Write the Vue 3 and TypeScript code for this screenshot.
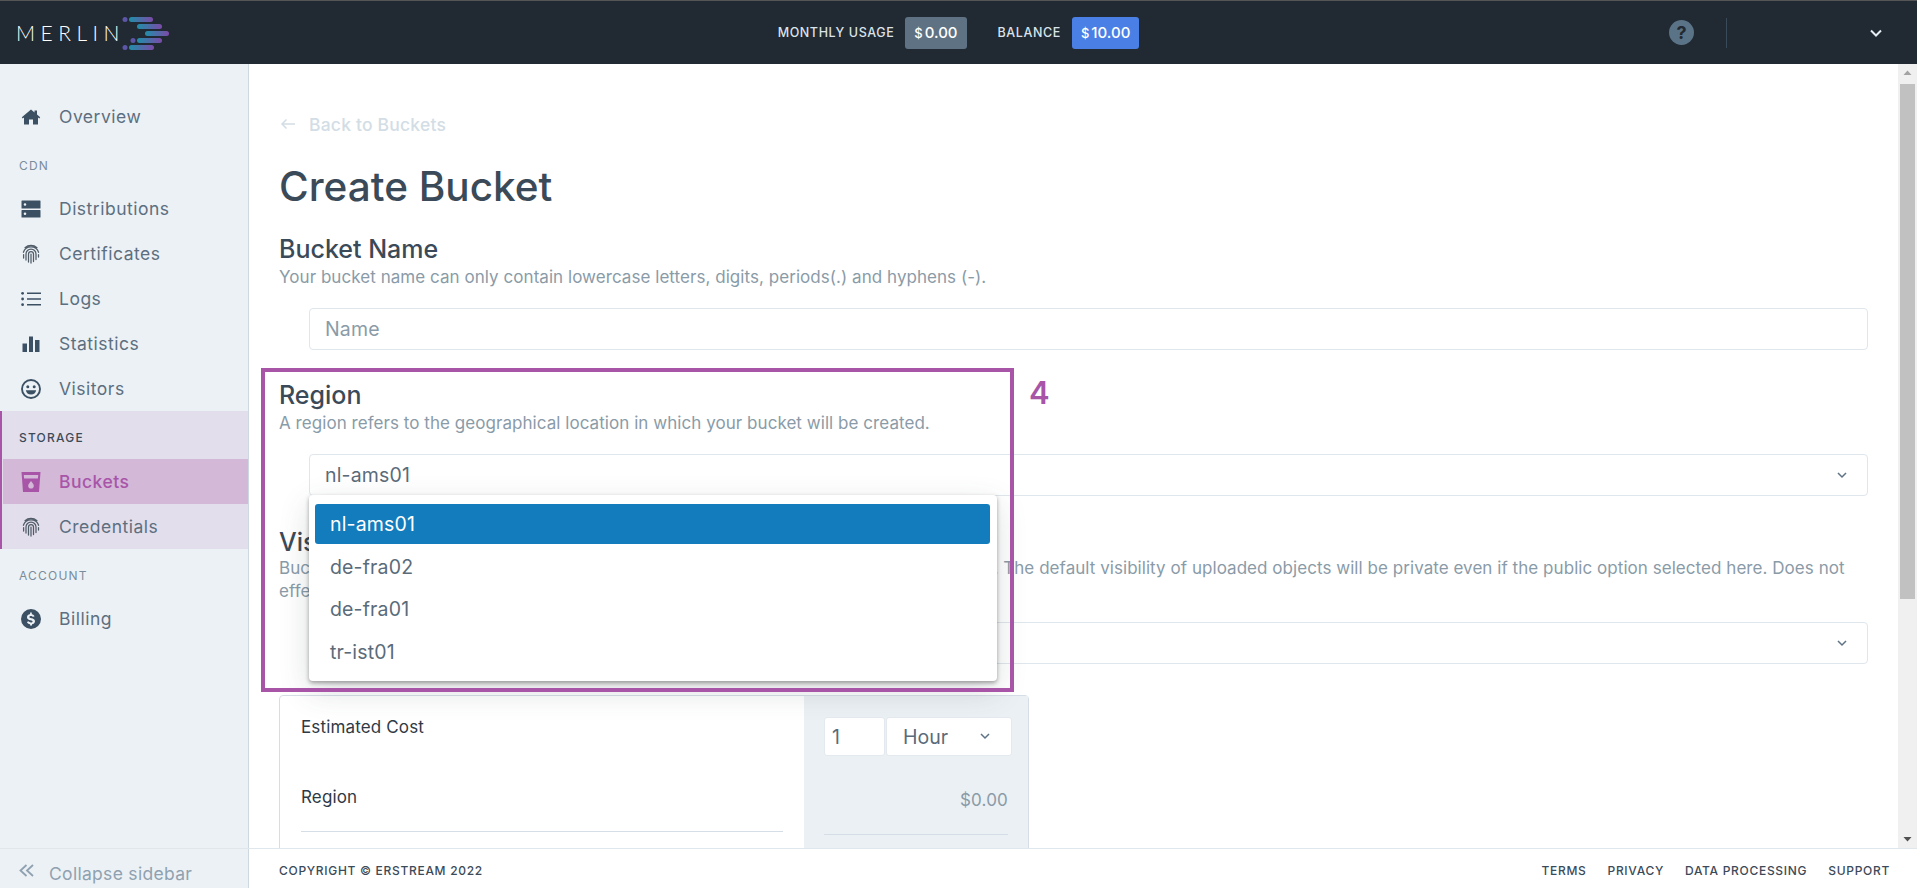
<script setup lang="ts">
const regions: string[] = ['nl-ams01', 'de-fra02', 'de-fra01', 'tr-ist01']
const footerLinks: string[] = ['TERMS', 'PRIVACY', 'DATA PROCESSING', 'SUPPORT']
const printPath =
  'M4 3.600a9 9 0 0 1 12 0M2.400 8.300a8 8 0 0 1 15.200 0M2.600 14v-3.500M17.500 13v-2.500M5 16V10a5 5 0 0 1 10 0v5.500M7.500 18V10a2.500 2.500 0 0 1 5 0v7.500M10 10v9'
</script>

<template>
  <div class="app">
    <header class="topbar">
      <div class="logo">
        <span class="logo-word">MERLIN</span>
        <svg class="logo-mark" width="50" height="34" viewBox="0 0 50 34">
          <defs>
            <linearGradient id="pill" x1="0" y1="0" x2="1" y2="0">
              <stop offset="0" stop-color="#1f8fa8" />
              <stop offset="1" stop-color="#7d4aa8" />
            </linearGradient>
          </defs>
          <circle cx="3" cy="3.500" r="2.500" fill="#5d55a8" />
          <rect x="7" y="1" width="24" height="5" rx="2.500" fill="url(#pill)" />
          <rect x="15" y="8" width="25" height="5" rx="2.500" fill="url(#pill)" />
          <rect x="23" y="15" width="24" height="5" rx="2.500" fill="url(#pill)" />
          <circle cx="11" cy="24.500" r="2.500" fill="#5d55a8" />
          <rect x="15" y="22" width="25" height="5" rx="2.500" fill="url(#pill)" />
          <circle cx="3" cy="31.500" r="2.500" fill="#5d55a8" />
          <rect x="7" y="29" width="25" height="5" rx="2.500" fill="url(#pill)" />
        </svg>
      </div>
      <div class="usage">
        <span class="usage-label">MONTHLY USAGE</span>
        <span class="pill pill-grey"><small>$</small>0.00</span>
        <span class="usage-label balance">BALANCE</span>
        <span class="pill pill-blue"><small>$</small>10.00</span>
      </div>
      <div class="top-right">
        <span class="help">?</span>
        <span class="divider"></span>
        <svg class="top-chev" width="14" height="10" viewBox="0 0 14 10"><path d="M2 2.500l5 5 5-5" fill="none" stroke="#e6edf3" stroke-width="2" /></svg>
      </div>
    </header>

    <div class="middle">
      <aside class="sidebar">
        <nav class="nav">
          <a class="item">
            <svg class="ico" viewBox="0 0 20 20"><path d="M10 2.500L.8 10.300l.9 1.100 1.300-1v7.100h5v-5h4v5h5v-7.100l1.300 1 .9-1.100-3.200-2.700V3.500h-2.500v1.900z" /></svg>
            <span>Overview</span>
          </a>
          <div class="label cdn">CDN</div>
          <a class="item">
            <svg class="ico" viewBox="0 0 20 20"><path fill-rule="evenodd" d="M1 1.500h18a.5.5 0 0 1 .5.5v7a.5.5 0 0 1-.5.5H1a.5.5 0 0 1-.5-.5V2a.5.5 0 0 1 .5-.5zM4 4.200a1.300 1.300 0 1 0 0 2.600 1.300 1.300 0 0 0 0-2.600zM1 11h18a.5.5 0 0 1 .5.5V18a.5.5 0 0 1-.5.5H1a.5.5 0 0 1-.5-.5v-6.500A.5.5 0 0 1 1 11zm3 2.500a1.300 1.300 0 1 0 0 2.600 1.300 1.300 0 0 0 0-2.600z" /></svg>
            <span>Distributions</span>
          </a>
          <a class="item">
            <svg class="ico print" viewBox="0 0 20 20"><path :d="printPath" /></svg>
            <span>Certificates</span>
          </a>
          <a class="item">
            <svg class="ico" viewBox="0 0 20 20"><path d="M6 3.500h14v1.600H6zM6 9.200h14v1.600H6zM6 14.900h14v1.600H6z" /><circle cx="1.600" cy="4.300" r="1.400" /><circle cx="1.600" cy="10" r="1.400" /><circle cx="1.600" cy="15.700" r="1.400" /></svg>
            <span>Logs</span>
          </a>
          <a class="item">
            <svg class="ico" viewBox="0 0 20 20"><path d="M1.500 9.500h4.500V18H1.500zM8 2.500h4V18H8zM14 6h4.500v12H14z" /></svg>
            <span>Statistics</span>
          </a>
          <a class="item">
            <svg class="ico" viewBox="0 0 20 20"><circle cx="10" cy="10" r="9" fill="none" stroke="currentColor" stroke-width="1.900" /><circle cx="6.800" cy="7.800" r="1.500" /><circle cx="13.200" cy="7.800" r="1.500" /><path d="M4.800 11.300h10.400a5.300 5.300 0 0 1-10.400 0z" /></svg>
            <span>Visitors</span>
          </a>
          <section class="group">
            <div class="label strong">STORAGE</div>
            <a class="item active">
              <svg class="ico" viewBox="0 0 20 20"><path fill-rule="evenodd" d="M.5 0h19L18 20H2zM2.800 3l.3 3.500h13.800l.3-3.500zM10 9c-1.200 1.800-2.800 3-2.800 4.800a2.800 2.800 0 0 0 5.600 0C12.800 12 11.200 10.800 10 9z" /></svg>
              <span>Buckets</span>
            </a>
            <a class="item">
              <svg class="ico print" viewBox="0 0 20 20"><path :d="printPath" /></svg>
              <span>Credentials</span>
            </a>
          </section>
          <div class="label account">ACCOUNT</div>
          <a class="item">
            <svg class="ico" viewBox="0 0 20 20"><path fill-rule="evenodd" d="M10 0a10 10 0 1 1 0 20 10 10 0 0 1 0-20zM9.100 3.500v1.600C7.300 5.400 6 6.600 6 8.200c0 1.900 1.600 2.600 3.400 3 1.600.4 2.200.7 2.200 1.300 0 .6-.7 1-1.700 1-1.100 0-1.900-.5-2.200-1.200l-1.800.7c.4 1.200 1.600 2 3.200 2.300v1.200h1.900v-1.200c1.800-.3 3-1.400 3-3 0-2-1.700-2.700-3.500-3.100-1.500-.4-2.100-.6-2.100-1.200 0-.6.6-1 1.500-1 1 0 1.600.4 1.900 1l1.800-.7c-.4-1-1.400-1.800-2.800-2.100V3.500z" /></svg>
            <span>Billing</span>
          </a>
        </nav>
      </aside>

      <main class="content">
        <a class="back"><svg width="16" height="12" viewBox="0 0 16 12"><path d="M15 6H2M6.500 1.500L2 6l4.500 4.500" fill="none" stroke="#d3dde5" stroke-width="1.500" /></svg><span>Back to Buckets</span></a>
        <h1>Create Bucket</h1>

        <section class="field">
          <h2>Bucket Name</h2>
          <p>Your bucket name can only contain lowercase letters, digits, periods(.) and hyphens (-).</p>
          <div class="control placeholder">Name</div>
        </section>

        <section class="field">
          <h2>Region</h2>
          <p>A region refers to the geographical location in which your bucket will be created.</p>
          <div class="control">
            <span>nl-ams01</span>
            <svg class="chev" width="10" height="7" viewBox="0 0 10 7"><path d="M1 1l4 4 4-4" fill="none" stroke="#5d7285" stroke-width="1.500" /></svg>
          </div>
        </section>

        <section class="field vis">
          <h2>Visibility</h2>
          <p>Bucket visibility determines who can list the objects that are stored inside of your bucket. The default visibility of uploaded objects will be private even if the public option selected here. Does not effect objects that are already uploaded.</p>
          <div class="control">
            <svg class="chev end" width="10" height="7" viewBox="0 0 10 7"><path d="M1 1l4 4 4-4" fill="none" stroke="#5d7285" stroke-width="1.500" /></svg>
          </div>
        </section>

        <div class="card">
          <div class="card-left">
            <div class="cost-title">Estimated Cost</div>
            <div class="cost-region">Region</div>
            <hr />
          </div>
          <div class="card-right">
            <div class="period">
              <div class="qty">1</div>
              <div class="unit">
                <span>Hour</span>
                <svg width="10" height="7" viewBox="0 0 10 7"><path d="M1 1l4 4 4-4" fill="none" stroke="#5d7285" stroke-width="1.500" /></svg>
              </div>
            </div>
            <div class="price">$0.00</div>
            <hr />
          </div>
        </div>

        <ul class="menu">
          <li v-for="(region, i) in regions" :key="region" :class="{ selected: i === 0 }">{{ region }}</li>
        </ul>
        <div class="callout"></div>
        <div class="callout-num">4</div>
      </main>

      <div class="scrollbar">
        <svg width="19" height="17" viewBox="0 0 19 17"><path d="M5.500 11L9.500 6.500 13.500 11z" fill="#a3a3a3" /></svg>
        <div class="thumb-track"><div class="thumb"></div></div>
        <svg width="19" height="17" viewBox="0 0 19 17"><path d="M5.500 6L9.500 10.500 13.500 6z" fill="#505050" /></svg>
      </div>
    </div>

    <footer class="footer">
      <div class="footer-left">
        <svg width="16" height="16" viewBox="0 0 16 16"><path d="M7.500 2L1.500 7.500l6 5.500M14 2L8 7.500l6 5.500" fill="none" stroke="#8fa1b0" stroke-width="1.800" /></svg>
        <span>Collapse sidebar</span>
      </div>
      <div class="footer-main">
        <span>COPYRIGHT © ERSTREAM 2022</span>
        <div class="links"><a v-for="link in footerLinks" :key="link">{{ link }}</a></div>
      </div>
    </footer>
  </div>
</template>

<style>
html,
body {
  margin: 0;
  height: 100%;
  overflow: hidden;
  background: #fff;
}
</style>

<style scoped>
* {
  box-sizing: border-box;
}
.app {
  height: 888px;
  display: grid;
  grid-template-rows: 64px 1fr 40px;
  font-family: Inter, Roboto, sans-serif;
  color: #3b4a58;
  overflow: hidden;
}
.topbar {
  background: #212932;
  border-top: 1px solid #555;
  display: grid;
  grid-template-columns: 1fr auto 1fr;
  align-items: center;
}
.logo {
  display: flex;
  align-items: center;
  padding-left: 16px;
  height: 63px;
}
.logo-word {
  font-family: Lato, sans-serif;
  font-weight: 300;
  font-size: 21px;
  letter-spacing: 5.500px;
  color: #fff;
  width: 106px;
  white-space: nowrap;
}
.usage {
  display: flex;
  align-items: center;
}
.usage-label {
  font-size: 12.500px;
  font-weight: 500;
  letter-spacing: 0.600px;
  color: #dbe3ea;
  margin-right: 11px;
}
.balance {
  margin-left: 31px;
}
.pill {
  height: 32px;
  border-radius: 3px;
  padding: 0 9px;
  display: flex;
  align-items: center;
  color: #fff;
  font-size: 15px;
  font-weight: 500;
}
.pill small {
  font-size: 13px;
  margin-right: 2px;
}
.pill-grey {
  background: #5f7283;
}
.pill-blue {
  background: #4a80e6;
}
.top-right {
  display: flex;
  align-items: center;
  justify-content: flex-end;
  height: 100%;
}
.help {
  width: 25px;
  height: 25px;
  border-radius: 50%;
  background: #5b7387;
  color: #212932;
  font-weight: 700;
  font-size: 18px;
  line-height: 25px;
  text-align: center;
}
.divider {
  width: 1px;
  height: 30px;
  background: #3b4a58;
  margin: 0 142px 0 32px;
}
.top-chev {
  margin-right: 34px;
}
.middle {
  display: grid;
  grid-template-columns: 249px 1fr 19px;
  min-height: 0;
  overflow: hidden;
}
.sidebar {
  background: #ecf1f5;
  border-right: 1px solid #cdd8e0;
  overflow: hidden;
}
.nav {
  padding-top: 30px;
}
.item {
  display: flex;
  align-items: center;
  height: 45px;
  padding-left: 21px;
  font-size: 17.500px;
  letter-spacing: 0.500px;
  color: #5c6f80;
}
.item span {
  margin-left: 18px;
}
.ico {
  width: 20px;
  height: 20px;
  fill: #3c5064;
  color: #3c5064;
  flex: none;
}
.print {
  fill: none;
  stroke: #4f5c68;
  stroke-width: 1.250;
  stroke-linecap: round;
}
.label {
  padding-left: 19px;
  display: flex;
  align-items: center;
  font-size: 12px;
  letter-spacing: 1.200px;
  color: #7a8c9c;
}
.cdn {
  height: 47px;
  padding-top: 6px;
}
.label.strong {
  height: 48px;
  padding: 4px 0 0 17px;
  font-weight: 500;
  color: #3b4a58;
}
.group {
  background: #e3deec;
  border-left: 2px solid #a855a8;
}
.group .item {
  padding-left: 19px;
}
.item.active {
  background: #d3b8d8;
  margin-left: 1px;
  padding-left: 18px;
  color: #a855a8;
  font-weight: 500;
}
.item.active .ico {
  fill: #a855a8;
}
.account {
  height: 47px;
  padding-top: 5px;
}
.content {
  position: relative;
  overflow: hidden;
  padding: 50px 30px 0 30px;
  background: #fff;
}
.back {
  display: flex;
  align-items: center;
  height: 20px;
  padding-left: 1px;
  font-size: 17.500px;
  font-weight: 500;
  letter-spacing: 0.200px;
  color: #d3dde5;
}
.back span {
  margin-left: 13px;
}
h1 {
  margin: 31px 0 25px;
  font-size: 40.500px;
  line-height: 44px;
  font-weight: 500;
  color: #3b4a58;
}
.field {
  margin-bottom: 30px;
}
h2 {
  margin: 0;
  font-size: 25px;
  line-height: 30px;
  font-weight: 500;
  color: #3b4a58;
}
p {
  margin: 0;
  font-size: 17px;
  letter-spacing: 0.050px;
  line-height: 24px;
  color: #8a9ba8;
  position: relative;
  top: 1px;
}
.vis p {
  line-height: 23px;
}
.vis h2 {
  position: relative;
  top: 1px;
}
.control {
  margin: 20px 0 0 30px;
  height: 42px;
  border: 1px solid #dfe6ec;
  border-radius: 4px;
  display: flex;
  align-items: center;
  justify-content: space-between;
  padding: 0 20px 0 15px;
  font-size: 19.500px;
  letter-spacing: 0.150px;
  color: #5a6b7a;
}
.control.placeholder {
  color: #8a9ba8;
}
.chev.end {
  margin-left: auto;
}
.card {
  display: grid;
  grid-template-columns: 524px 224px;
  width: 750px;
  height: 260px;
  border: 1px solid #d5dee6;
  border-radius: 4px 4px 0 0;
  margin-top: 31px;
}
.card-left {
  padding: 19px 21px 0 21px;
  font-size: 17px;
  letter-spacing: 0.150px;
  line-height: 24px;
  color: #2e3a46;
}
.cost-region {
  margin-top: 46px;
}
hr {
  border: 0;
  height: 1px;
  background: #d5dee6;
  margin: 0;
}
.card-left hr {
  margin-top: 22px;
}
.card-right {
  background: #ebf0f4;
  padding: 21px 20px 0 20px;
}
.period {
  display: flex;
  height: 39px;
  gap: 1px;
}
.qty,
.unit {
  background: #fff;
  border: 1px solid #e3e9ee;
  border-radius: 3px;
  display: flex;
  align-items: center;
  font-size: 19.500px;
  color: #5a6b7a;
  flex: none;
}
.qty {
  width: 61px;
  padding-left: 7px;
}
.unit {
  width: 126px;
  padding: 0 21px 0 16px;
  justify-content: space-between;
}
.price {
  text-align: right;
  font-size: 17px;
  letter-spacing: 0.200px;
  line-height: 24px;
  color: #8a9ba8;
  margin-top: 32px;
}
.card-right hr {
  margin-top: 22px;
}
.menu {
  position: absolute;
  left: 60px;
  top: 431px;
  width: 688px;
  height: 186px;
  margin: 0;
  padding: 9px 7px 8px 6px;
  list-style: none;
  background: #fff;
  border-radius: 4px;
  box-shadow: 0 2px 4px rgba(0, 0, 0, 0.35), 0 10px 30px rgba(60, 70, 80, 0.18);
  font-size: 19.500px;
  letter-spacing: 0.150px;
  color: #5a6b7a;
}
.menu li {
  height: 40px;
  line-height: 40px;
  padding-left: 15px;
  margin-bottom: 2.500px;
  border-radius: 3px;
}
.menu li.selected {
  background: #127cbd;
  color: #fff;
}
.callout {
  position: absolute;
  left: 12px;
  top: 304px;
  width: 753px;
  height: 324px;
  border: 4px solid #a855a8;
  pointer-events: none;
}
.callout-num {
  position: absolute;
  left: 780px;
  top: 311px;
  font-size: 31px;
  font-weight: 600;
  line-height: 36px;
  color: #a855a8;
}
.scrollbar {
  background: #f0f0f0;
  display: flex;
  flex-direction: column;
  align-items: center;
  justify-content: space-between;
}
.thumb-track {
  flex: 1;
  width: 100%;
  padding: 3px 2px 0 2px;
}
.thumb {
  height: 515px;
  background: #c1c1c1;
}
.footer {
  display: grid;
  grid-template-columns: 249px 1fr;
  border-top: 1px solid #dfe6ec;
  background: #fff;
}
.footer-left {
  background: #ecf1f5;
  border-right: 1px solid #cdd8e0;
  display: flex;
  align-items: center;
  padding: 10px 0 0 19px;
  color: #8fa1b0;
  font-size: 17.500px;
  letter-spacing: 0.300px;
}
.footer-left svg {
  margin-top: -6px;
}
.footer-left span {
  margin-left: 14px;
}
.footer-main {
  display: flex;
  align-items: center;
  justify-content: space-between;
  padding: 4px 27px 0 30px;
  font-size: 12px;
  font-weight: 500;
  letter-spacing: 0.700px;
  color: #3b4a58;
}
.links {
  display: flex;
  gap: 21px;
}
</style>
